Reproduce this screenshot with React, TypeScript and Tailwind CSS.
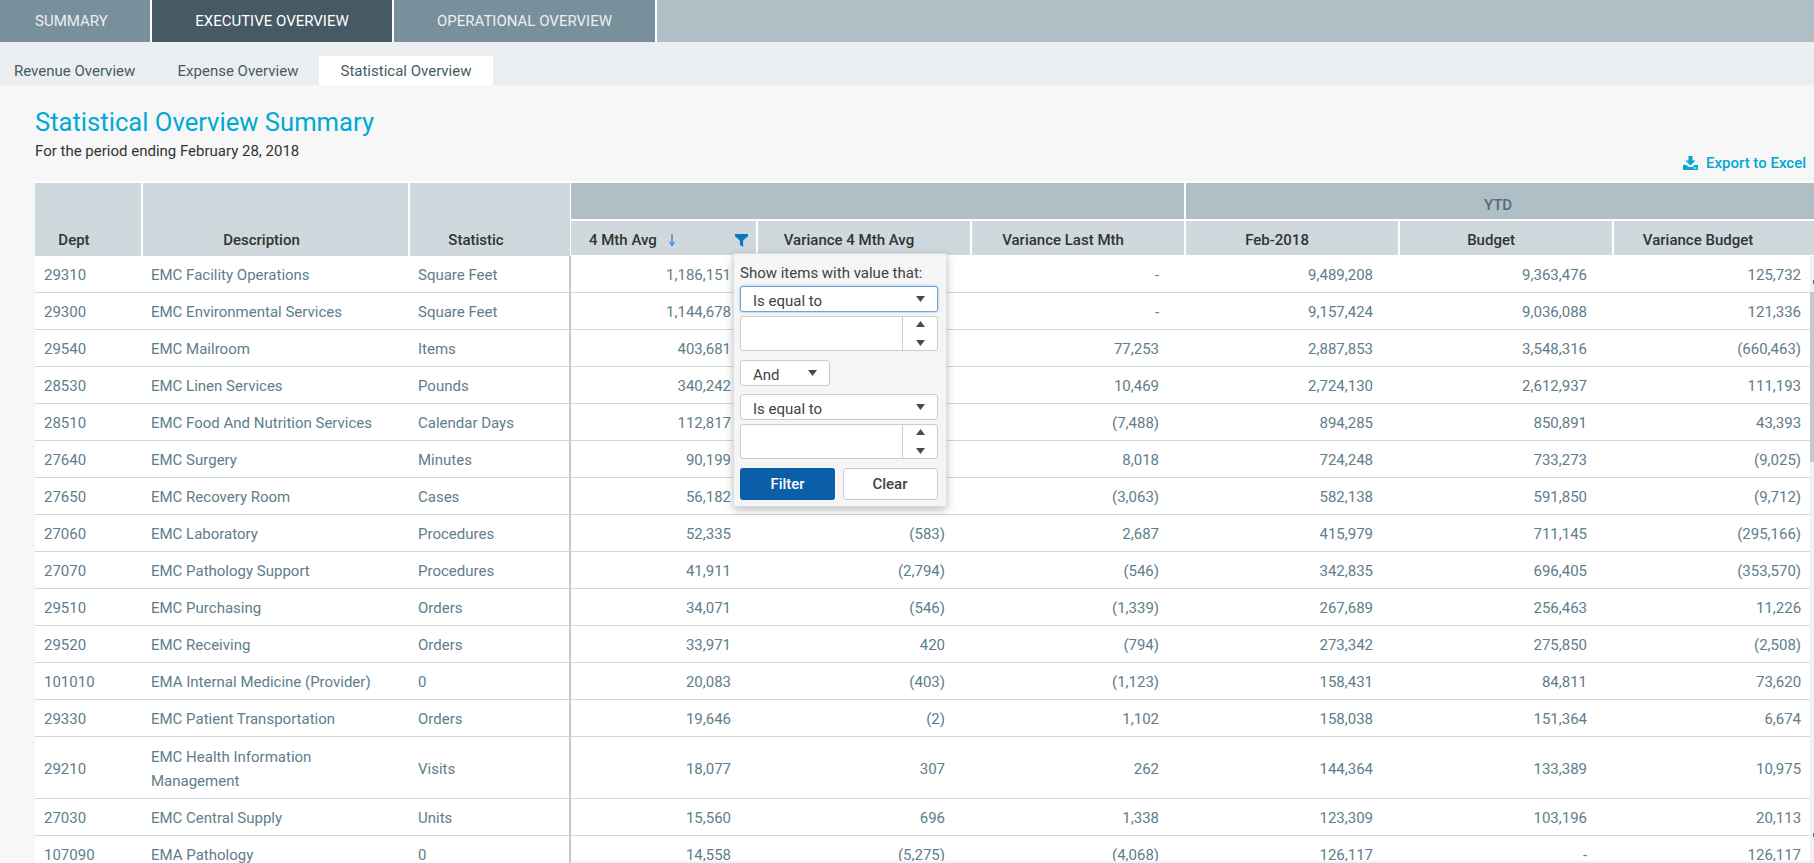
import React from 'react';

const rows = [
  ['29310', 'EMC Facility Operations', 'Square Feet', '1,186,151', '', '-', '9,489,208', '9,363,476', '125,732'],
  ['29300', 'EMC Environmental Services', 'Square Feet', '1,144,678', '', '-', '9,157,424', '9,036,088', '121,336'],
  ['29540', 'EMC Mailroom', 'Items', '403,681', '', '77,253', '2,887,853', '3,548,316', '(660,463)'],
  ['28530', 'EMC Linen Services', 'Pounds', '340,242', '', '10,469', '2,724,130', '2,612,937', '111,193'],
  ['28510', 'EMC Food And Nutrition Services', 'Calendar Days', '112,817', '', '(7,488)', '894,285', '850,891', '43,393'],
  ['27640', 'EMC Surgery', 'Minutes', '90,199', '', '8,018', '724,248', '733,273', '(9,025)'],
  ['27650', 'EMC Recovery Room', 'Cases', '56,182', '', '(3,063)', '582,138', '591,850', '(9,712)'],
  ['27060', 'EMC Laboratory', 'Procedures', '52,335', '(583)', '2,687', '415,979', '711,145', '(295,166)'],
  ['27070', 'EMC Pathology Support', 'Procedures', '41,911', '(2,794)', '(546)', '342,835', '696,405', '(353,570)'],
  ['29510', 'EMC Purchasing', 'Orders', '34,071', '(546)', '(1,339)', '267,689', '256,463', '11,226'],
  ['29520', 'EMC Receiving', 'Orders', '33,971', '420', '(794)', '273,342', '275,850', '(2,508)'],
  ['101010', 'EMA Internal Medicine (Provider)', '0', '20,083', '(403)', '(1,123)', '158,431', '84,811', '73,620'],
  ['29330', 'EMC Patient Transportation', 'Orders', '19,646', '(2)', '1,102', '158,038', '151,364', '6,674'],
  ['29210', 'EMC Health Information Management', 'Visits', '18,077', '307', '262', '144,364', '133,389', '10,975'],
  ['27030', 'EMC Central Supply', 'Units', '15,560', '696', '1,338', '123,309', '103,196', '20,113'],
  ['107090', 'EMA Pathology', '0', '14,558', '(5,275)', '(4,068)', '126,117', '-', '126,117'],
];

function Caret({ up }: { up?: boolean }) {
  return (
    <svg width="9" height="6" viewBox="0 0 9 6" className="block">
      <path d={up ? 'M4.5 0L9 6H0Z' : 'M0 0H9L4.5 6Z'} fill="#4a4a4a" />
    </svg>
  );
}

function Select({ label, className }: { label: string; className: string }) {
  return (
    <div className={`flex h-[26px] items-center justify-between rounded-[3px] border bg-white pl-[12px] pr-[12px] ${className}`}>
      <span className="mt-[5px] text-[15px] leading-none text-[#424242]">{label}</span>
      <Caret />
    </div>
  );
}

function NumberBox() {
  return (
    <div className="flex h-[35px] rounded-[3px] border border-[#cccccc] bg-white">
      <div className="flex-1" />
      <div className="flex w-[35px] flex-col items-center justify-between border-l border-[#cccccc] py-[4px]">
        <Caret up />
        <Caret />
      </div>
    </div>
  );
}

function FilterMenu() {
  return (
    <div className="absolute left-[698px] top-[70px] z-10 flex h-[254px] w-[214px] flex-col rounded-[2px] border border-[#dddddd] bg-[#f5f5f5] pl-[6px] pr-[8px] pt-[9px] shadow-[0_3px_8px_rgba(0,0,0,0.25)]">
      <div className="h-[23px] text-[15px] leading-[20px] text-[#424242]">Show items with value that:</div>
      <Select label="Is equal to" className="border-[#6ea6dc] shadow-[0_0_3px_#8fbce6]" />
      <div className="mt-[4px]"><NumberBox /></div>
      <div className="mt-[9px] w-[90px]"><Select label="And" className="border-[#cccccc]" /></div>
      <div className="mt-[8px]"><Select label="Is equal to" className="border-[#cccccc]" /></div>
      <div className="mt-[4px]"><NumberBox /></div>
      <div className="mt-[9px] flex h-[32px] gap-[8px]">
        <button className="w-[95px] rounded-[3px] bg-[#0b5ea8] text-[15px] font-medium text-white">Filter</button>
        <button className="flex-1 rounded-[3px] border border-[#cccccc] bg-white pr-[1px] text-[15px] font-medium text-[#424242]">Clear</button>
      </div>
    </div>
  );
}

export default function App() {
  return (
    <div className="h-[863px] w-[1814px] overflow-hidden bg-[#f7f7f7] font-['Roboto',sans-serif]">
      {/* Top tabs */}
      <div className="flex h-[42px] gap-[2px] bg-white text-[15px] text-[#eceff1]">
        <div className="flex w-[150px] items-center bg-[#78909c] pl-[35px]">SUMMARY</div>
        <div className="flex w-[240px] items-center justify-center bg-[#455a64] text-white">EXECUTIVE OVERVIEW</div>
        <div className="flex w-[261px] items-center justify-center bg-[#78909c]">OPERATIONAL OVERVIEW</div>
        <div className="flex-1 bg-[#b0bec5]" />
      </div>

      {/* Sub tabs */}
      <div className="flex h-[43px] items-end bg-[#eceff1] text-[15px] text-[#455a64]">
        <div className="flex h-[29px] w-[164px] items-center pl-[14px] pt-[1px]">Revenue Overview</div>
        <div className="flex h-[29px] w-[155px] items-center justify-center pr-[7px] pt-[1px]">Expense Overview</div>
        <div className="flex h-[29px] w-[174px] items-center justify-center bg-white pt-[1px]">Statistical Overview</div>
      </div>

      {/* Heading */}
      <div className="flex h-[96px] items-start justify-between pl-[35px] pr-[8px]">
        <div className="pt-[20px]">
          <h1 className="text-[25.6px] leading-[34px] text-[#00a8d4]">Statistical Overview Summary</h1>
          <p className="mt-[2px] text-[15px] leading-[20px] text-[#333333]">For the period ending February 28, 2018</p>
        </div>
        <div className="mt-[68px] flex items-center gap-[8px] text-[15px] font-medium leading-[20px] text-[#00a8d4]">
          <svg width="15" height="14" viewBox="0 0 15 14">
            <path d="M5.5 0H9.5V4.5H12.5L7.5 9.5L2.5 4.5H5.5Z" fill="#00a8d4" />
            <path d="M0 9H3.5L5.5 11H9.5L11.5 9H15V14H0Z" fill="#00a8d4" />
            <rect x="10.5" y="11.5" width="3" height="1" fill="#ffffff" />
          </svg>
          Export to Excel
        </div>
      </div>

      {/* Grid */}
      <div className="relative ml-[35px] h-[682px] overflow-hidden border-t-2 border-white bg-white">
        <table className="w-[1779px] table-fixed border-separate border-spacing-0">
          <colgroup>
            <col className="w-[108px]" />
            <col className="w-[267px]" />
            <col className="w-[161px]" />
            <col className="w-[187px]" />
            <col className="w-[214px]" />
            <col className="w-[214px]" />
            <col className="w-[214px]" />
            <col className="w-[214px]" />
            <col className="w-[200px]" />
          </colgroup>
          <thead className="text-[15px] font-medium text-[#333333]">
            <tr className="h-[38px]">
              <th rowSpan={2} className="border-r-2 border-white bg-[#cfd8dc] pb-[5px] pr-[28px] align-bottom font-medium">Dept</th>
              <th rowSpan={2} className="border-r-2 border-white bg-[#cfd8dc] pb-[5px] pr-[28px] align-bottom font-medium">Description</th>
              <th rowSpan={2} className="border-r border-white bg-[#cfd8dc] pb-[5px] pr-[28px] align-bottom font-medium">Statistic</th>
              <th colSpan={3} className="border-b-2 border-r-2 border-white bg-[#b0bec5]" />
              <th colSpan={3} className="border-b-2 border-white bg-[#b0bec5] pr-[4px] pt-[9px] text-[15px] font-medium text-[#546e7a]">YTD</th>
            </tr>
            <tr className="h-[35px]">
              <th className="border-b border-r-2 border-white bg-[#cfd8dc] pl-[18px] pr-[8px] font-medium">
                <div className="mt-[5px] flex items-center justify-between">
                  <span className="flex items-center gap-[11px]">
                    4 Mth Avg
                    <svg width="8" height="13" viewBox="0 0 8 13"><path d="M3.2 0H4.8V9L8 6.6L4 13L0 6.6L3.2 9Z" fill="#4a90d9" /></svg>
                  </span>
                  <svg width="13" height="13" viewBox="0 0 12 12"><path d="M0 0H12V2L7.5 6V12L4.5 10V6L0 2Z" fill="#0b78b8" /></svg>
                </div>
              </th>
              <th className="border-b border-r-2 border-white bg-[#cfd8dc] pr-[30px] pt-[5px] font-medium">Variance 4 Mth Avg</th>
              <th className="border-b border-r-2 border-white bg-[#cfd8dc] pr-[30px] pt-[5px] font-medium">Variance Last Mth</th>
              <th className="border-b border-r-2 border-white bg-[#cfd8dc] pr-[30px] pt-[5px] font-medium">Feb-2018</th>
              <th className="border-b border-r-2 border-white bg-[#cfd8dc] pr-[30px] pt-[5px] font-medium">Budget</th>
              <th className="border-b border-white bg-[#cfd8dc] pr-[32px] pt-[5px] font-medium">Variance Budget</th>
            </tr>
          </thead>
          <tbody className="text-[15px] leading-[24px] text-[#607d8b]">
            {rows.map((r) => (
              <tr key={r[0]}>
                <td className={`${r[0] === '29210' ? 'h-[62px]' : 'h-[37px]'} border-b border-[#cfd8dc] pl-[9px] pt-[2px]`}>{r[0]}</td>
                <td className="border-b border-[#cfd8dc] pb-[5px] pl-[8px] pr-[20px] pt-[7px]">{r[1]}</td>
                <td className="border-b border-r-2 border-[#cfd8dc] border-r-[#c8c8c8] pl-[8px] pt-[2px]">{r[2]}</td>
                <td className="border-b border-[#cfd8dc] pr-[27px] pt-[2px] text-right">{r[3]}</td>
                <td className="border-b border-[#cfd8dc] pr-[27px] pt-[2px] text-right">{r[4]}</td>
                <td className="border-b border-[#cfd8dc] pr-[27px] pt-[2px] text-right">{r[5]}</td>
                <td className="border-b border-[#cfd8dc] pr-[27px] pt-[2px] text-right">{r[6]}</td>
                <td className="border-b border-[#cfd8dc] pr-[27px] pt-[2px] text-right">{r[7]}</td>
                <td className="border-b border-[#cfd8dc] pr-[13px] pt-[2px] text-right">{r[8]}</td>
              </tr>
            ))}
          </tbody>
        </table>
        <FilterMenu />
        {/* scrollbars */}
        <div className="absolute bottom-0 left-[537px] right-0 h-[2px] bg-[#f1f1f1]" />
        <div className="absolute bottom-0 right-0 top-[73px] w-[4px] bg-[#f1f1f1]">
          <div className="mt-[36px] h-[170px] bg-[#c8c8c8]" />
          <div className="absolute right-0 top-[24px] h-[4px] w-[1px] bg-[#666666]" />
          <div className="absolute right-0 top-[577px] h-[4px] w-[1px] bg-[#666666]" />
        </div>
      </div>
    </div>
  );
}
